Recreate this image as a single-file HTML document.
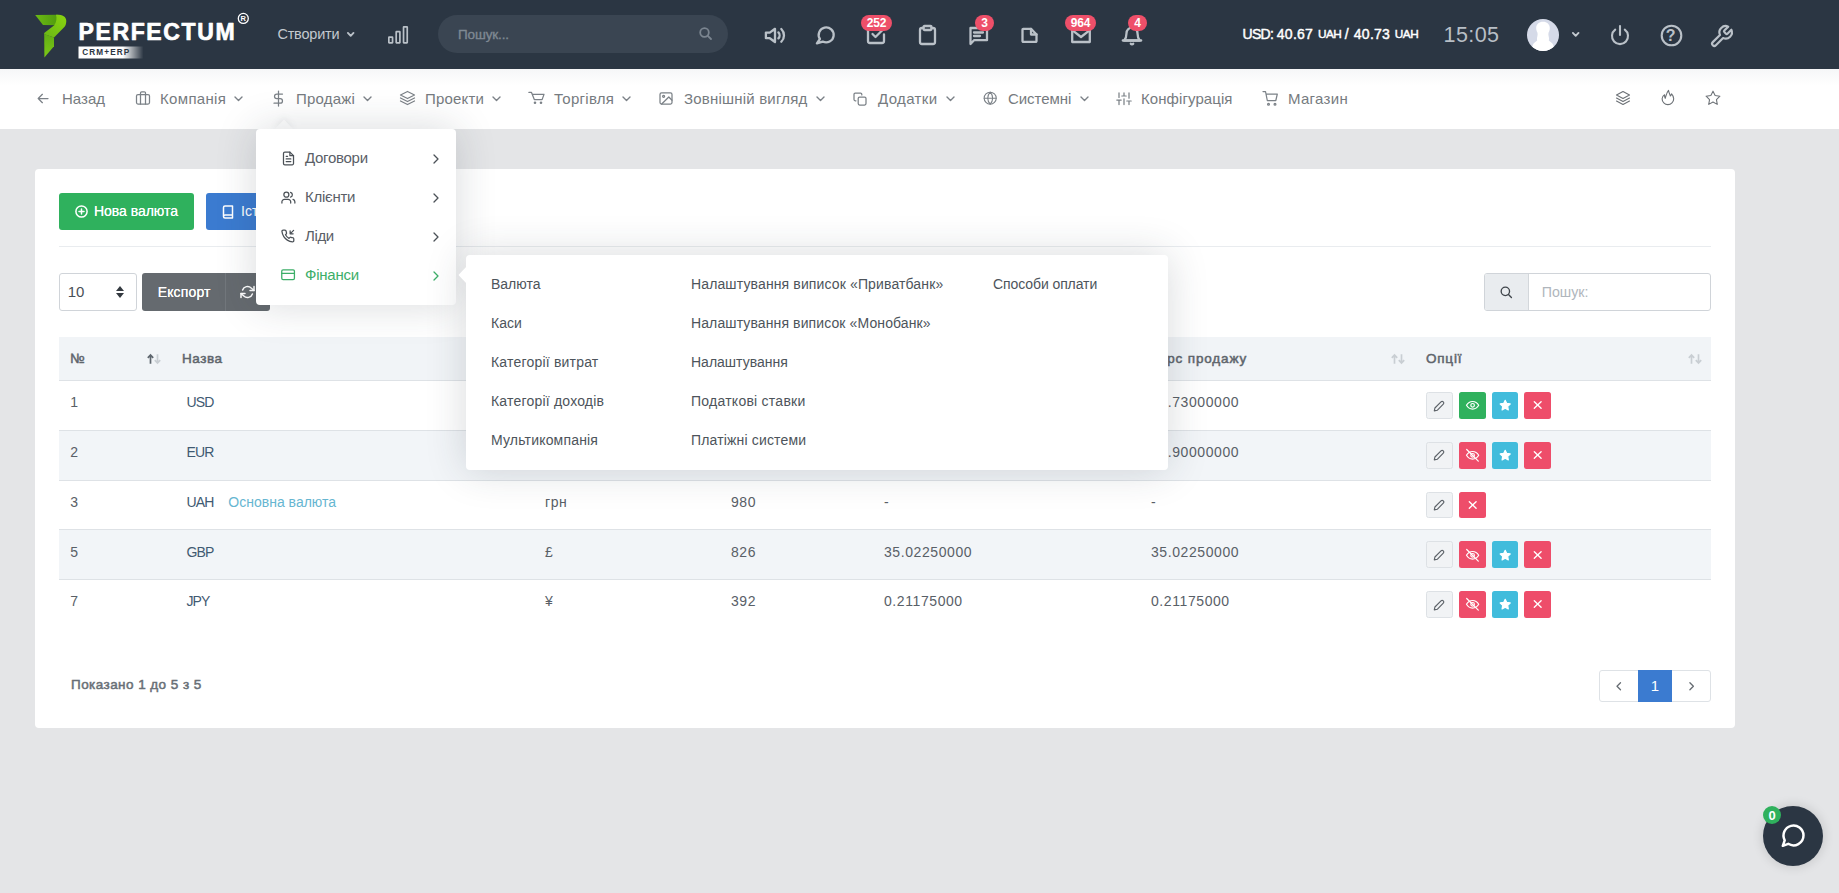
<!DOCTYPE html>
<html lang="uk">
<head>
<meta charset="utf-8">
<title>Валюта</title>
<style>
*{box-sizing:border-box;margin:0;padding:0}
html,body{width:1839px;height:893px;overflow:hidden}
body{font-family:"Liberation Sans",sans-serif;background:#e4e5e7;color:#495057;font-size:14px;position:relative}
.abs{position:absolute}
svg{display:block;overflow:visible}
.ico{fill:none;stroke:currentColor;stroke-width:2;stroke-linecap:round;stroke-linejoin:round}
/* header */
#hdr{position:absolute;left:0;top:0;width:1839px;height:69px;background:#2b3643}
#hdr .t{position:absolute;white-space:nowrap}
.hi{position:absolute;color:#bac1c8}
#hdr .hi.ico{stroke-width:2.300}
.badge{position:absolute;height:15.400px;border-radius:8px;background:#ee4f69;color:#fff;font-weight:700;font-size:12px;line-height:17.400px;text-align:center;letter-spacing:-0.2px;margin-top:.3px;overflow:hidden}
/* nav */
#nav{position:absolute;left:0;top:69px;width:1839px;height:60px;background:linear-gradient(#f6f7f8,#fff 17px)}
.ni{position:absolute;top:0;height:60px;line-height:59px;font-size:15px;color:#767b80;white-space:nowrap}
.nic{position:absolute;color:#7b8187}
.chev{stroke-width:1.400 !important}
/* card */
#card{position:absolute;left:35px;top:169px;width:1700px;height:558.700px;background:#fff;border-radius:4px}
.btn{position:absolute;color:#fff;border-radius:3px;white-space:nowrap;font-size:14px}
table{position:absolute;left:59px;top:337px;width:1652px;border-collapse:collapse;table-layout:fixed;font-size:14px;color:#596067}
th{height:43.5px;background:#f1f4f7;text-align:left;font-weight:400;-webkit-text-stroke:.5px #5e656c;color:#5e656c;padding:0 12px;position:relative;border-bottom:1px solid #dee2e6;font-size:13.5px;letter-spacing:.25px}
td{height:49.75px;padding:0 12px;border-top:1px solid #dee2e6;vertical-align:top;padding-top:13.400px;position:relative}
tr.s td{background:#f2f5f8}
.ob{position:absolute;top:11px;width:26.500px;height:26.800px;border-radius:2.500px;color:#fff}
.ob svg{position:absolute;left:6.300px;top:6.400px}
/* dropdowns */
.dd{position:absolute;background:#fff;border-radius:4px;box-shadow:0 0 40px rgba(40,50,60,.18)}
.di{position:absolute;left:49px;font-size:15px;color:#5a6067;white-space:nowrap;line-height:20px}
.mi{position:absolute;font-size:14px;color:#4d545b;white-space:nowrap;line-height:20px}

.ob{left:12px}
.ob.e{background:#f1f3f5;border:1px solid #dde1e5;color:#5c6268}
.ob.e svg{left:5.300px;top:5.600px}
.ob.g{background:#2fb15d}
.ob.c{background:#41bcdc}
.ob.r{background:#ee4d6a}
.so{position:absolute;right:9.500px;top:17px}
.cn{color:#3f5a72;margin-left:4.500px;letter-spacing:-0.9px}
td.n{letter-spacing:.58px}
td:first-child,th:first-child{padding-left:11.200px}
.mc{color:#66b6d1;margin-left:15px}
.tx{white-space:nowrap}
</style>
</head>
<body>
<div id="hdr">
<!-- logo -->
<svg class="abs" style="left:0;top:0" width="270" height="69" viewBox="0 0 270 69">
<defs>
<linearGradient id="g1" x1="0" y1="0" x2="1" y2="0"><stop offset="0" stop-color="#6cbb14"/><stop offset="1" stop-color="#4f9a0e"/></linearGradient>
<linearGradient id="g2" x1="1" y1="0" x2="0" y2="1"><stop offset="0" stop-color="#8ad40f"/><stop offset="1" stop-color="#6ab716"/></linearGradient>
<linearGradient id="g3" x1="0" y1="0" x2="0" y2="1"><stop offset="0" stop-color="#62ad14"/><stop offset="1" stop-color="#7cc916"/></linearGradient>
<linearGradient id="g4" x1="0" y1="0" x2="1" y2="0"><stop offset="0" stop-color="#fff"/><stop offset=".68" stop-color="#fff"/><stop offset="1" stop-color="#fff" stop-opacity="0"/></linearGradient>
</defs>
<path d="M35.2 15 L58 14.8 L57 25.2 L43 25 Z" fill="url(#g1)"/>
<path d="M56 14.8 C62 14.6 66.4 16.5 66.3 21 C66.2 23.5 65.6 25.6 64.6 26.8 L54 37.6 L44.2 34.2 L44.2 33 L54.3 25.2 C56.5 22 57 18 56 14.8 Z" fill="url(#g2)"/>
<path d="M44.2 34 L54 37.5 L54 46.2 L44.4 57.6 Z" fill="url(#g3)"/>
<rect x="78.5" y="46.5" width="65" height="12" fill="url(#g4)"/>
<text x="78.600" y="40.200" font-family="Liberation Sans, sans-serif" font-weight="700" font-size="23" fill="#fff" stroke="#fff" stroke-width=".700" stroke-linejoin="round" textLength="156" lengthAdjust="spacing">PERFECTUM</text>
<text x="82.300" y="55.200" font-family="Liberation Sans, sans-serif" font-weight="700" font-size="8.2" fill="#2b3643" textLength="47" lengthAdjust="spacing">CRM+ERP</text>
<circle cx="243.3" cy="18.4" r="5" fill="none" stroke="#fff" stroke-width="1.3"/>
<text x="243.3" y="21.2" text-anchor="middle" font-family="Liberation Sans, sans-serif" font-weight="700" font-size="7.5" fill="#fff">R</text>
</svg>
<div class="t" id="crt" style="left:277.400px;top:25px;font-size:14.5px;line-height:18px;color:#c3c9cf;letter-spacing:-0.2px">Створити</div>
<svg class="hi ico" style="left:347.200px;top:31.700px;stroke-width:1.900 !important" width="7.400" height="4.800" viewBox="0 0 7.400 4.800"><path d="M.900 .900l2.800 2.900L6.500 .900"/></svg>
<!-- bars -->
<svg class="hi" style="left:388px;top:26.200px" width="20.200" height="17.700" viewBox="0 0 20.200 17.700" fill="none" stroke="currentColor" stroke-width="1.700"><rect x=".850" y="11.100" width="3.700" height="5.750" rx=".300"/><rect x="8.200" y="5.700" width="3.700" height="11.150" rx=".300"/><rect x="15.550" y=".850" width="3.700" height="16" rx=".300"/></svg>
<!-- search -->
<div class="abs" style="left:438px;top:15px;width:290px;height:38px;border-radius:19px;background:#3a4552"></div>
<div class="t" id="srch" style="left:458px;top:26.800px;font-size:13.500px;line-height:16px;color:#7f8993;-webkit-text-stroke:.35px #7f8993;letter-spacing:-0.12px">Пошук...</div>
<svg class="abs ico" style="left:699px;top:27px;color:#7b8590;stroke-width:1.8" width="13" height="13" viewBox="0 0 13 13"><circle cx="5.5" cy="5.5" r="4.3"/><path d="M8.8 8.8l3.2 3.2"/></svg>
<!-- icons -->
<svg class="hi ico" style="left:764px;top:25px" width="22" height="20" viewBox="0 0 22 20"><path d="M11 3.800L5.800 7.600H1.900v5.600h3.900L11 17z"/><path d="M14.400 7.400a4.400 4.400 0 0 1 0 6"/><path d="M17.300 4a9 9 0 0 1 0 12.800"/></svg>
<svg class="hi ico" style="left:815px;top:25px" width="21" height="21" viewBox="0 0 21 21"><path d="M4.900 14A7.500 7.500 0 1 1 7.700 16.550L1.900 18.400z"/></svg>
<svg class="hi ico" style="left:866px;top:26px" width="20" height="19" viewBox="0 0 20 19"><path d="M18 8.5V15a2 2 0 0 1-2 2H4a2 2 0 0 1-2-2V3.5"/><path d="M6.5 8l3 3 7-7"/></svg>
<div class="badge" style="left:861px;top:15px;width:31px">252</div>
<svg class="hi ico" style="left:918px;top:24px" width="19" height="22" viewBox="0 0 19 22"><path d="M13.5 4H15a2 2 0 0 1 2 2v12a2 2 0 0 1-2 2H4a2 2 0 0 1-2-2V6a2 2 0 0 1 2-2h1.5"/><rect x="5.5" y="2" width="8" height="4" rx="1"/></svg>
<svg class="hi ico" style="left:968px;top:26px" width="21" height="20" viewBox="0 0 21 20"><path d="M19 2H2.5v16l3.5-3.8H19z"/><path d="M6 6.5h9M6 10h6"/></svg>
<div class="badge" style="left:975px;top:15px;width:19px">3</div>
<svg class="hi ico" style="left:1020px;top:27px" width="19" height="17" viewBox="0 0 19 17"><path d="M11 1.800H3.200a.700.700 0 0 0-.700.700v11.600a.700.700 0 0 0 .700.700h12.600a.700.700 0 0 0 .700-.700V7.500z"/><path d="M11 1.800v5.700h5.500"/></svg>
<svg class="hi ico" style="left:1070px;top:27px" width="22" height="18" viewBox="0 0 22 18"><path d="M2.200 2v13h17.600V2"/><path d="M2.200 3.200l8.800 6.800 8.800-6.800"/></svg>
<div class="badge" style="left:1065px;top:15px;width:31px">964</div>
<svg class="hi ico" style="left:1121px;top:25px" width="22" height="21" viewBox="0 0 22 21"><path d="M16.500 8.200a5.500 5.500 0 0 0-11 0c0 3.800-1.200 6-2.300 7.300h15.600c-1.100-1.300-2.300-3.500-2.300-7.300z"/><path d="M1.800 15.500h18.400"/><path d="M12.200 18.700a1.500 1.500 0 0 1-2.400 0"/></svg>
<div class="badge" style="left:1128px;top:15px;width:19px">4</div>
<!-- rate -->
<div class="t" id="r1" style="left:1242.600px;top:25px;font-size:14px;line-height:18px;color:#fff;font-weight:400;-webkit-text-stroke:.45px #fff;letter-spacing:-0.71px">USD:</div><div class="t" id="r2" style="left:1276.800px;top:25px;font-size:14px;line-height:18px;color:#fff;font-weight:400;-webkit-text-stroke:.45px #fff;letter-spacing:0.27px">40.67</div><div class="t" id="r3" style="left:1318px;top:26px;font-size:11.800px;line-height:16px;color:#fff;font-weight:400;-webkit-text-stroke:.45px #fff;letter-spacing:-0.57px">UAH</div><div class="t" id="r4" style="left:1344.800px;top:25px;font-size:14px;line-height:18px;color:#fff;font-weight:400;-webkit-text-stroke:.45px #fff">/</div><div class="t" id="r5" style="left:1353.800px;top:25px;font-size:14px;line-height:18px;color:#fff;font-weight:400;-webkit-text-stroke:.45px #fff;letter-spacing:0.27px">40.73</div><div class="t" id="r6" style="left:1394.800px;top:26px;font-size:11.800px;line-height:16px;color:#fff;font-weight:400;-webkit-text-stroke:.45px #fff;letter-spacing:-0.47px">UAH</div>
<div class="t" id="clk" style="left:1443.500px;top:20.700px;font-size:21.500px;line-height:28px;color:#b8bfc6;letter-spacing:0.42px">15:05</div>
<!-- avatar -->
<svg class="abs" style="left:1527px;top:19px" width="32" height="32" viewBox="0 0 32 32"><defs><clipPath id="av"><circle cx="16" cy="16" r="16"/></clipPath></defs><g clip-path="url(#av)"><rect width="32" height="32" fill="#d5dae8"/><path d="M16 2.800c-4 0-6.800 2.600-6.800 6.200 0 2 .600 3.400 1.200 4.600.300 1 .300 2.200 0 3.400-.400 1.600-.600 3-.200 4.600-1.500 1.200-3.600 2.400-4.400 4.400-.700 1.800-.800 4-.800 6h22c0-2-.100-4.200-.800-6-.800-2-2.900-3.200-4.400-4.400.400-1.600.200-3-.200-4.600-.300-1.200-.300-2.400 0-3.400.600-1.200 1.200-2.600 1.200-4.600 0-3.600-2.800-6.200-6.800-6.200z" fill="#fff"/></g></svg>
<svg class="hi ico" style="left:1572.100px;top:31.600px;stroke-width:1.900 !important;color:#c3c9cf" width="7.400" height="4.800" viewBox="0 0 7.400 4.800"><path d="M.900 .900l2.800 2.900L6.500 .900"/></svg>
<svg class="hi ico" style="left:1609px;top:24px;stroke-width:2.100 !important" width="22" height="22" viewBox="0 0 22 22"><path d="M15.800 5.700a8 8 0 1 1-9.600 0"/><path d="M11 2v9"/></svg>
<svg class="hi ico" style="left:1659.800px;top:24.200px;stroke-width:2.100 !important" width="23" height="23" viewBox="0 0 23 23"><circle cx="11.500" cy="11.500" r="9.800"/></svg>
<div class="t" style="left:1665.700px;top:26.400px;font-size:16px;line-height:19px;font-weight:700;color:#bac1c8">?</div>
<svg class="hi ico" style="left:1709.400px;top:24.300px;stroke-width:2.100 !important" width="25" height="25" viewBox="0 0 24 24"><path d="M14.700 6.300a1 1 0 0 0 0 1.400l1.600 1.600a1 1 0 0 0 1.400 0l3.770-3.770a6 6 0 0 1-7.940 7.940l-6.910 6.910a2.120 2.120 0 0 1-3-3l6.910-6.910a6 6 0 0 1 7.940-7.940l-3.760 3.760z"/></svg>
</div>
<div id="nav">
<svg class="nic ico" style="left:36.500px;top:23.500px;stroke-width:1.250" width="12" height="11" viewBox="0 0 12 11"><path d="M11 5.500H1.200M5.400 1.300L1.200 5.500l4.200 4.200"/></svg>
<div class="ni" id="n0" style="left:62px">Назад</div>
<svg class="nic ico" style="left:135px;top:21px;stroke-width:1.250" width="16" height="16" viewBox="0 0 16 16"><rect x="1.500" y="4.500" width="13" height="9.500" rx="1.500"/><path d="M5.500 14V3a1.200 1.200 0 0 1 1.200-1.200h2.600A1.200 1.200 0 0 1 10.500 3v11"/></svg>
<div class="ni" id="n1" style="left:160px;letter-spacing:0.33px">Компанія</div>
<svg class="nic ico chev" style="left:234px;top:27px" width="9" height="6" viewBox="0 0 9 6"><path d="M1 1l3.500 3.500L8 1"/></svg>
<svg class="nic ico" style="left:272px;top:21px;stroke-width:1.250" width="13" height="17" viewBox="0 0 13 17"><path d="M6.500 1v15"/><path d="M10.500 4H4.800a2.300 2.300 0 0 0 0 4.600h3.400a2.300 2.300 0 0 1 0 4.600H2"/></svg>
<div class="ni" id="n2" style="left:296px;letter-spacing:0.2px">Продажі</div>
<svg class="nic ico chev" style="left:363px;top:27px" width="9" height="6" viewBox="0 0 9 6"><path d="M1 1l3.500 3.500L8 1"/></svg>
<svg class="nic ico" style="left:399px;top:21px;stroke-width:1.250" width="17" height="16" viewBox="0 0 17 16"><path d="M8.500 1.500L1.500 5l7 3.500 7-3.500z"/><path d="M1.500 8l7 3.500 7-3.500"/><path d="M1.500 11l7 3.500 7-3.500"/></svg>
<div class="ni" id="n3" style="left:425px;letter-spacing:0.17px">Проекти</div>
<svg class="nic ico chev" style="left:492px;top:27px" width="9" height="6" viewBox="0 0 9 6"><path d="M1 1l3.500 3.500L8 1"/></svg>
<svg class="nic ico" style="left:528px;top:20.600px;stroke-width:1.250" width="17" height="15" viewBox="0 0 17 15"><circle cx="7" cy="12.700" r=".700"/><circle cx="13" cy="12.700" r=".700"/><path d="M.900 2.400h2.600l2.800 7.200h7.800L16 4.400H4.800"/></svg>
<div class="ni" id="n4" style="left:554px;letter-spacing:0.28px">Торгівля</div>
<svg class="nic ico chev" style="left:622px;top:27px" width="9" height="6" viewBox="0 0 9 6"><path d="M1 1l3.500 3.500L8 1"/></svg>
<svg class="nic ico" style="left:659.300px;top:23px;stroke-width:1.250" width="14" height="13" viewBox="0 0 14 13"><rect x="1" y=".900" width="12" height="11.200" rx="1.500"/><circle cx="4.600" cy="4.300" r="1"/><path d="M13 8.200L9.800 5 2.700 12"/></svg>
<div class="ni" id="n5" style="left:684px;letter-spacing:0.2px">Зовнішній вигляд</div>
<svg class="nic ico chev" style="left:816px;top:27px" width="9" height="6" viewBox="0 0 9 6"><path d="M1 1l3.500 3.500L8 1"/></svg>
<svg class="nic ico" style="left:853px;top:22.500px;stroke-width:1.250" width="14" height="14" viewBox="0 0 14 14"><rect x="5.200" y="5.200" width="7.800" height="7.800" rx="1.400"/><path d="M2.900 8.800H2.200A1.200 1.200 0 0 1 1 7.600V2.200A1.200 1.200 0 0 1 2.200 1h5.400a1.200 1.200 0 0 1 1.200 1.200v.700"/></svg>
<div class="ni" id="n6" style="left:878px;letter-spacing:0.37px">Додатки</div>
<svg class="nic ico chev" style="left:946px;top:27px" width="9" height="6" viewBox="0 0 9 6"><path d="M1 1l3.500 3.500L8 1"/></svg>
<svg class="nic ico" style="left:983px;top:22.200px;stroke-width:1.200" width="14.400" height="14.400" viewBox="0 0 16 16"><circle cx="8" cy="8" r="6.700"/><path d="M1.300 8h13.400"/><path d="M8 1.300a10 10 0 0 1 2.700 6.700A10 10 0 0 1 8 14.700 10 10 0 0 1 5.300 8 10 10 0 0 1 8 1.300z"/></svg>
<div class="ni" id="n7" style="left:1008px;letter-spacing:-0.06px">Системні</div>
<svg class="nic ico chev" style="left:1080px;top:27px" width="9" height="6" viewBox="0 0 9 6"><path d="M1 1l3.500 3.500L8 1"/></svg>
<svg class="nic ico" style="left:1116px;top:23px;stroke-width:1.250" width="16" height="13.500" viewBox="0 0 16 15" preserveAspectRatio="none"><path d="M3 14V9M3 6V1M8 14V7.500M8 4.500V1M13 14v-4M13 7V1M.800 9h4.400M5.800 4.500h4.400M10.800 10h4.400"/></svg>
<div class="ni" id="n8" style="left:1141px;letter-spacing:0.08px">Конфігурація</div>
<svg class="nic ico" style="left:1262px;top:21px;stroke-width:1.250" width="17" height="17" viewBox="0 0 17 17"><circle cx="6.500" cy="14.300" r=".900"/><circle cx="13" cy="14.300" r=".900"/><path d="M1 1.500h2.500l1.800 9h8.500l1.500-6.300H4.200"/></svg>
<div class="ni" id="n9" style="left:1288px;letter-spacing:0.3px">Магазин</div>
<svg class="nic ico" style="left:1615px;top:21.300px;stroke-width:1.100;color:#6c7176" width="16" height="16" viewBox="0 0 16 16"><path d="M8 1.500L1.500 5 8 8.500 14.500 5z"/><path d="M1.500 8L8 11.500 14.500 8"/><path d="M1.500 11L8 14.500 14.500 11"/></svg>
<svg class="nic ico" style="left:1662px;top:21.300px;stroke-width:1.100;color:#6c7176" width="12" height="15" viewBox="0 0 12 15"><path d="M6.500 .300C6.800 3 8 4.500 8.400 6 9 5.300 9.400 4.600 9.600 3.800 11 5.300 11.700 7 11.700 8.800A5.800 5.800 0 0 1 .100 8.800C.100 7.300 .900 5.900 2.600 4.800 2.500 6.200 2.700 7.400 3.200 8.300 4 6 4.500 2.500 6.500 .300z"/></svg>
<svg class="nic ico" style="left:1704.900px;top:21px;stroke-width:1.200;color:#6c7176" width="16" height="15.100" viewBox="0 0 18 17"><path d="M9 1.300l2.400 4.900 5.400.800-3.900 3.800.900 5.400L9 13.600l-4.800 2.600.900-5.400L1.200 7l5.400-.800z"/></svg>
</div>
<div id="card"></div>
<!-- buttons -->
<div class="btn" style="left:59px;top:193px;width:135px;height:37px;background:#2fb15d"></div>
<svg class="abs ico" style="left:75px;top:205px;color:#fff;stroke-width:1.500" width="13" height="13" viewBox="0 0 13 13"><circle cx="6.500" cy="6.500" r="5.600"/><path d="M6.500 4v5M4 6.500h5"/></svg>
<div class="abs tx" id="b1" style="left:94px;top:202px;color:#fff;font-size:14px;line-height:18px;white-space:nowrap;text-shadow:0 0 .4px #fff;letter-spacing:-0.04px">Нова валюта</div>
<div class="btn" style="left:206px;top:193px;width:120px;height:37px;background:#3b7bd0"></div>
<svg class="abs ico" style="left:222px;top:204.500px;color:#fff;stroke-width:1.500" width="12" height="14" viewBox="0 0 12 14"><path d="M1.500 11.500V2.500A1.500 1.500 0 0 1 3 1h7.500v12H3a1.500 1.500 0 0 1 0-3h7.500"/></svg>
<div class="abs tx" style="left:241px;top:202px;color:#fff;font-size:14px;line-height:18px;white-space:nowrap">Історія</div>
<div class="abs" style="left:59px;top:245.500px;width:1652px;height:1px;background:#e9ecef"></div>
<!-- length select -->
<div class="abs" style="left:59px;top:273px;width:78px;height:38px;border:1px solid #d0d4d9;border-radius:3px;background:#fff"></div>
<div class="abs tx" style="left:67.700px;top:283px;font-size:15px;line-height:18px;color:#495057">10</div>
<svg class="abs" style="left:116px;top:286px" width="8" height="12" viewBox="0 0 8 12"><path d="M4 0L8 5H0zM4 12L0 7h8z" fill="#343a40"/></svg>
<!-- export group -->
<div class="abs" style="left:142px;top:273px;width:128px;height:38px;border-radius:3px;background:#656a6f"></div>
<div class="abs" style="left:225px;top:273px;width:1px;height:38px;background:#72777c"></div>
<div class="abs tx" id="b2" style="left:157.700px;top:283px;color:#fff;font-size:14px;line-height:18px;white-space:nowrap;text-shadow:0 0 .4px #fff;letter-spacing:0.15px">Експорт</div>
<svg class="abs ico" style="left:240px;top:285px;color:#fff;stroke-width:1.500" width="15" height="14" viewBox="0 0 15 14"><path d="M14 1.500v4h-4"/><path d="M1 12.500v-4h4"/><path d="M2.600 5a5.200 5.200 0 0 1 8.600-2L14 5.500M1 8.500l2.800 2.500a5.200 5.200 0 0 0 8.600-2"/></svg>
<!-- search -->
<div class="abs" style="left:1484px;top:273px;width:227px;height:38px;border:1px solid #d0d4d9;border-radius:3px;background:#fff"></div>
<div class="abs" style="left:1485px;top:274px;width:44px;height:36px;border-right:1px solid #d3d7db;border-radius:2px 0 0 2px;background:#e9ecef"></div>
<svg class="abs ico" style="left:1500.200px;top:285.600px;color:#3f454b;stroke-width:1.500" width="12.500" height="12.500" viewBox="0 0 14 14"><circle cx="6" cy="6" r="4.700"/><path d="M9.500 9.500l3.300 3.300"/></svg>
<div class="abs tx" style="left:1541.700px;top:283.300px;font-size:14.200px;line-height:18px;color:#b0b6bc">Пошук:</div>
<!-- table -->
<table>
<colgroup><col style="width:111px"><col style="width:363px"><col style="width:186px"><col style="width:153px"><col style="width:267px"><col style="width:275px"><col style="width:297px"></colgroup>
<thead><tr><th><span id="h0" style="letter-spacing:0">№</span><svg class="so" width="14" height="10" viewBox="0 0 14 10" fill="none" stroke-width="1.700"><path d="M3.500 9.800V1.200M.800 3.800L3.500 1l2.700 2.800" stroke="#5e666e"/><path d="M10.500 .200v8.600M7.800 6.200L10.500 9l2.700-2.800" stroke="#c9ced3"/></svg></th><th><span id="h1" style="letter-spacing:.55px">Назва</span><svg class="so" width="14" height="10" viewBox="0 0 14 10" fill="none" stroke-width="1.700"><path d="M3.500 9.800V1.200M.800 3.800L3.500 1l2.700 2.800" stroke="#c9ced3"/><path d="M10.500 .200v8.600M7.800 6.200L10.500 9l2.700-2.800" stroke="#c9ced3"/></svg></th><th><span id="h2" style="letter-spacing:.7px">Символ</span><svg class="so" width="14" height="10" viewBox="0 0 14 10" fill="none" stroke-width="1.700"><path d="M3.500 9.800V1.200M.800 3.800L3.500 1l2.700 2.800" stroke="#c9ced3"/><path d="M10.500 .200v8.600M7.800 6.200L10.500 9l2.700-2.800" stroke="#c9ced3"/></svg></th><th><span id="h3" style="letter-spacing:.7px">ISO код</span><svg class="so" width="14" height="10" viewBox="0 0 14 10" fill="none" stroke-width="1.700"><path d="M3.500 9.800V1.200M.800 3.800L3.500 1l2.700 2.800" stroke="#c9ced3"/><path d="M10.500 .200v8.600M7.800 6.200L10.500 9l2.700-2.800" stroke="#c9ced3"/></svg></th><th><span id="h4" style="letter-spacing:.8px">Курс купівлі</span><svg class="so" width="14" height="10" viewBox="0 0 14 10" fill="none" stroke-width="1.700"><path d="M3.500 9.800V1.200M.800 3.800L3.500 1l2.700 2.800" stroke="#c9ced3"/><path d="M10.500 .200v8.600M7.800 6.200L10.500 9l2.700-2.800" stroke="#c9ced3"/></svg></th><th><span id="h5" style="letter-spacing:.85px">Курс продажу</span><svg class="so" width="14" height="10" viewBox="0 0 14 10" fill="none" stroke-width="1.700"><path d="M3.500 9.800V1.200M.800 3.800L3.500 1l2.700 2.800" stroke="#c9ced3"/><path d="M10.500 .200v8.600M7.800 6.200L10.500 9l2.700-2.800" stroke="#c9ced3"/></svg></th><th><span id="h6" style="letter-spacing:.78px">Опції</span><svg class="so" width="14" height="10" viewBox="0 0 14 10" fill="none" stroke-width="1.700"><path d="M3.500 9.800V1.200M.800 3.800L3.500 1l2.700 2.800" stroke="#c9ced3"/><path d="M10.500 .200v8.600M7.800 6.200L10.500 9l2.700-2.800" stroke="#c9ced3"/></svg></th></tr></thead>
<tbody>
<tr><td class="n">1</td><td><span class="cn">USD</span></td><td>$</td><td class="n">840</td><td class="n">40.67000000</td><td class="n">40.73000000</td><td><b class="ob e"><svg class="ico" width="14" height="14" viewBox="0 0 14 14" style="stroke-width:1.150"><path d="M2.300 11.900l.600-2.900 6.100-6.100a1.650 1.650 0 0 1 2.300 0 1.650 1.650 0 0 1 0 2.300l-6.100 6.100z"/></svg></b><b class="ob g" style="left:45px;width:27px"><svg class="ico" width="14" height="14" viewBox="0 0 14 14" style="stroke-width:1.200"><path d="M1.500 7.300S3.700 3.500 7.600 3.500s6.100 3.800 6.100 3.800-2.200 3.800-6.100 3.800S1.500 7.300 1.500 7.300z"/><circle cx="7.600" cy="7.300" r="1.800"/></svg></b><b class="ob c" style="left:78.200px;width:25.800px"><svg width="14" height="14" viewBox="0 0 14 14"><path d="M7.200 2.300l1.550 3.150 3.450.500-2.500 2.450.600 3.450L7.200 10.200l-3.100 1.650.600-3.450-2.500-2.450 3.450-.500z" fill="#fff" stroke="#fff" stroke-width="1.200" stroke-linejoin="round"/></svg></b><b class="ob r" style="left:110.200px;width:26.800px"><svg class="ico" width="14" height="14" viewBox="0 0 14 14" style="stroke-width:1.400"><path d="M4.300 3.800l6.800 6.400M11.100 3.800l-6.800 6.400"/></svg></b></td></tr>
<tr class="s"><td class="n">2</td><td><span class="cn">EUR</span></td><td>€</td><td class="n">978</td><td class="n">43.60000000</td><td class="n">43.90000000</td><td><b class="ob e"><svg class="ico" width="14" height="14" viewBox="0 0 14 14" style="stroke-width:1.150"><path d="M2.300 11.900l.600-2.900 6.100-6.100a1.650 1.650 0 0 1 2.300 0 1.650 1.650 0 0 1 0 2.300l-6.100 6.100z"/></svg></b><b class="ob r h" style="left:45px;width:27px"><svg class="ico" width="14" height="14" viewBox="0 0 14 14" style="stroke-width:1.200"><path d="M1.500 7.300S3.700 3.500 7.600 3.500s6.100 3.800 6.100 3.800-2.200 3.800-6.100 3.800S1.500 7.300 1.500 7.300z"/><circle cx="7.600" cy="7.300" r="1.800"/><path d="M1.700 1.500l11.600 11.600"/></svg></b><b class="ob c" style="left:78.200px;width:25.800px"><svg width="14" height="14" viewBox="0 0 14 14"><path d="M7.200 2.300l1.550 3.150 3.450.500-2.500 2.450.600 3.450L7.200 10.200l-3.100 1.650.600-3.450-2.500-2.450 3.450-.500z" fill="#fff" stroke="#fff" stroke-width="1.200" stroke-linejoin="round"/></svg></b><b class="ob r" style="left:110.200px;width:26.800px"><svg class="ico" width="14" height="14" viewBox="0 0 14 14" style="stroke-width:1.400"><path d="M4.300 3.800l6.800 6.400M11.100 3.800l-6.800 6.400"/></svg></b></td></tr>
<tr><td class="n">3</td><td><span class="cn">UAH</span><span class="mc">Основна валюта</span></td><td style="letter-spacing:.6px">грн</td><td class="n">980</td><td>-</td><td>-</td><td><b class="ob e"><svg class="ico" width="14" height="14" viewBox="0 0 14 14" style="stroke-width:1.150"><path d="M2.300 11.900l.600-2.900 6.100-6.100a1.650 1.650 0 0 1 2.300 0 1.650 1.650 0 0 1 0 2.300l-6.100 6.100z"/></svg></b><b class="ob r" style="left:45px;width:27px"><svg class="ico" width="14" height="14" viewBox="0 0 14 14" style="stroke-width:1.400"><path d="M4.300 3.800l6.800 6.400M11.100 3.800l-6.800 6.400"/></svg></b></td></tr>
<tr class="s"><td class="n">5</td><td><span class="cn">GBP</span></td><td>£</td><td class="n">826</td><td class="n">35.02250000</td><td class="n">35.02250000</td><td><b class="ob e"><svg class="ico" width="14" height="14" viewBox="0 0 14 14" style="stroke-width:1.150"><path d="M2.300 11.900l.600-2.900 6.100-6.100a1.650 1.650 0 0 1 2.300 0 1.650 1.650 0 0 1 0 2.300l-6.100 6.100z"/></svg></b><b class="ob r h" style="left:45px;width:27px"><svg class="ico" width="14" height="14" viewBox="0 0 14 14" style="stroke-width:1.200"><path d="M1.500 7.300S3.700 3.500 7.600 3.500s6.100 3.800 6.100 3.800-2.200 3.800-6.100 3.800S1.500 7.300 1.500 7.300z"/><circle cx="7.600" cy="7.300" r="1.800"/><path d="M1.700 1.500l11.600 11.600"/></svg></b><b class="ob c" style="left:78.200px;width:25.800px"><svg width="14" height="14" viewBox="0 0 14 14"><path d="M7.200 2.300l1.550 3.150 3.450.500-2.500 2.450.600 3.450L7.200 10.200l-3.100 1.650.600-3.450-2.500-2.450 3.450-.500z" fill="#fff" stroke="#fff" stroke-width="1.200" stroke-linejoin="round"/></svg></b><b class="ob r" style="left:110.200px;width:26.800px"><svg class="ico" width="14" height="14" viewBox="0 0 14 14" style="stroke-width:1.400"><path d="M4.300 3.800l6.800 6.400M11.100 3.800l-6.800 6.400"/></svg></b></td></tr>
<tr><td class="n">7</td><td><span class="cn">JPY</span></td><td>¥</td><td class="n">392</td><td class="n">0.21175000</td><td class="n">0.21175000</td><td><b class="ob e"><svg class="ico" width="14" height="14" viewBox="0 0 14 14" style="stroke-width:1.150"><path d="M2.300 11.900l.600-2.900 6.100-6.100a1.650 1.650 0 0 1 2.300 0 1.650 1.650 0 0 1 0 2.300l-6.100 6.100z"/></svg></b><b class="ob r h" style="left:45px;width:27px"><svg class="ico" width="14" height="14" viewBox="0 0 14 14" style="stroke-width:1.200"><path d="M1.500 7.300S3.700 3.500 7.600 3.500s6.100 3.800 6.100 3.800-2.200 3.800-6.100 3.800S1.500 7.300 1.500 7.300z"/><circle cx="7.600" cy="7.300" r="1.800"/><path d="M1.700 1.500l11.600 11.600"/></svg></b><b class="ob c" style="left:78.200px;width:25.800px"><svg width="14" height="14" viewBox="0 0 14 14"><path d="M7.200 2.300l1.550 3.150 3.450.500-2.500 2.450.600 3.450L7.200 10.200l-3.100 1.650.600-3.450-2.500-2.450 3.450-.500z" fill="#fff" stroke="#fff" stroke-width="1.200" stroke-linejoin="round"/></svg></b><b class="ob r" style="left:110.200px;width:26.800px"><svg class="ico" width="14" height="14" viewBox="0 0 14 14" style="stroke-width:1.400"><path d="M4.300 3.800l6.800 6.400M11.100 3.800l-6.800 6.400"/></svg></b></td></tr>
</tbody>
</table>
<div class="abs tx" id="info" style="left:71px;top:676px;font-size:13.500px;line-height:18px;font-weight:400;-webkit-text-stroke:.5px #686f76;color:#686f76;white-space:nowrap;letter-spacing:0.44px">Показано 1 до 5 з 5</div>
<!-- pagination -->
<div class="abs" style="left:1599px;top:670px;width:112px;height:32px;border:1px solid #dee2e6;border-radius:3px;background:#fff"></div>
<div class="abs" style="left:1638px;top:670px;width:34px;height:32px;background:#3b7bd0;color:#fff;font-size:15px;line-height:32px;text-align:center">1</div>
<svg class="abs ico" style="left:1616.300px;top:681.800px;color:#666c72;stroke-width:1.300" width="5.400" height="8.600" viewBox="0 0 5.400 8.600"><path d="M4.500 .800L1 4.300l3.500 3.500"/></svg>
<svg class="abs ico" style="left:1688.700px;top:681.800px;color:#666c72;stroke-width:1.300" width="5.400" height="8.600" viewBox="0 0 5.400 8.600"><path d="M.900 .800l3.500 3.500-3.500 3.500"/></svg>

<!-- dropdown level 1 -->
<svg class="abs" style="left:270px;top:118px;filter:drop-shadow(0 -2px 3px rgba(40,50,60,.08))" width="28" height="12" viewBox="0 0 28 12"><path d="M4 12L14 1.500 24 12z" fill="#fff"/></svg>
<div class="dd" style="left:256px;top:129px;width:200px;height:176px">
<svg class="abs ico" style="left:25.700px;top:21.500px;color:#4b5157;stroke-width:1.350" width="13" height="14.900" viewBox="0 0 14 16"><path d="M8.500 1.200H3A1.400 1.400 0 0 0 1.600 2.600v10.800A1.400 1.400 0 0 0 3 14.800h8a1.400 1.400 0 0 0 1.400-1.400V5z"/><path d="M8.500 1.200V5h3.900M4.500 8.500h5M4.500 11.300h5M4.500 5.700h1.500"/></svg>
<div class="di" id="d0" style="top:19px;letter-spacing:-0.28px">Договори</div>
<svg class="abs ico" style="left:24.700px;top:61.600px;color:#4b5157;stroke-width:1.350" width="14.800" height="13" viewBox="0 0 16 14"><path d="M10.500 13v-1.300A2.700 2.700 0 0 0 7.800 9H3.700A2.700 2.700 0 0 0 1 11.700V13"/><circle cx="5.800" cy="4" r="2.700"/><path d="M15 13v-1.300a2.700 2.700 0 0 0-2-2.600M10.300 1.400a2.700 2.700 0 0 1 0 5.200"/></svg>
<div class="di" id="d1" style="top:58px;letter-spacing:-0.26px">Клієнти</div>
<svg class="abs ico" style="left:25.300px;top:99.600px;color:#4b5157;stroke-width:1.350" width="14" height="14" viewBox="0 0 15 15"><path d="M13.500 1.500L9.800 5.200M9.800 2v3.200H13"/><path d="M13.700 10.700v1.900a1.300 1.300 0 0 1-1.400 1.300 12.600 12.600 0 0 1-5.500-2 12.400 12.400 0 0 1-3.800-3.800 12.600 12.600 0 0 1-2-5.500A1.300 1.300 0 0 1 2.300 1.200h1.900a1.300 1.300 0 0 1 1.300 1.100 8 8 0 0 0 .4 1.800 1.300 1.300 0 0 1-.3 1.300l-.8.800a10.200 10.200 0 0 0 3.800 3.800l.8-.8a1.300 1.300 0 0 1 1.300-.300 8 8 0 0 0 1.800.400 1.300 1.300 0 0 1 1.200 1.400z"/></svg>
<div class="di" id="d2" style="top:97px;letter-spacing:-0.38px">Ліди</div>
<svg class="abs ico" style="left:25px;top:140.300px;color:#3cae68;stroke-width:1.350" width="14.200" height="11.400" viewBox="0 0 15 12"><rect x=".800" y=".800" width="13.400" height="10.400" rx="1.400"/><path d="M.800 4.500h13.400"/></svg>
<div class="di" id="d3" style="top:136px;color:#3cae68;letter-spacing:-0.23px">Фінанси</div>
<svg class="abs ico" style="left:177px;top:25px;color:#4b5157;stroke-width:1.300" width="6" height="10" viewBox="0 0 6 10"><path d="M1 1l4 4-4 4"/></svg>
<svg class="abs ico" style="left:177px;top:64px;color:#4b5157;stroke-width:1.300" width="6" height="10" viewBox="0 0 6 10"><path d="M1 1l4 4-4 4"/></svg>
<svg class="abs ico" style="left:177px;top:103px;color:#4b5157;stroke-width:1.300" width="6" height="10" viewBox="0 0 6 10"><path d="M1 1l4 4-4 4"/></svg>
<svg class="abs ico" style="left:177px;top:142px;color:#3cae68;stroke-width:1.300" width="6" height="10" viewBox="0 0 6 10"><path d="M1 1l4 4-4 4"/></svg>
</div>
<!-- mega -->
<div class="dd" style="left:466px;top:255px;width:702px;height:215px">
<svg class="abs" style="left:-8px;top:11px" width="9" height="18" viewBox="0 0 9 18"><path d="M9 0L.500 9 9 18z" fill="#fff"/></svg>
<div class="mi" id="m0" style="left:25px;top:19px">Валюта</div>
<div class="mi" id="m1" style="left:25px;top:58px">Каси</div>
<div class="mi" id="m2" style="left:25px;top:97px;letter-spacing:0.2px">Категорії витрат</div>
<div class="mi" id="m3" style="left:25px;top:136px;letter-spacing:0.2px">Категорії доходів</div>
<div class="mi" id="m4" style="left:25px;top:175px;letter-spacing:0.18px">Мультикомпанія</div>
<div class="mi" id="m5" style="left:225px;top:19px;letter-spacing:0.13px">Налаштування виписок «Приватбанк»</div>
<div class="mi" id="m6" style="left:225px;top:58px;letter-spacing:0.11px">Налаштування виписок «Монобанк»</div>
<div class="mi" id="m7" style="left:225px;top:97px">Налаштування</div>
<div class="mi" id="m8" style="left:225px;top:136px;letter-spacing:0.25px">Податкові ставки</div>
<div class="mi" id="m9" style="left:225px;top:175px;letter-spacing:0.16px">Платіжні системи</div>
<div class="mi" id="m10" style="left:527px;top:19px;letter-spacing:-0.09px">Способи оплати</div>
</div>
<!-- chat float -->
<div class="abs" style="left:1763px;top:806px;width:60px;height:60px;border-radius:30px;background:#2b3643;box-shadow:0 0 12px rgba(0,0,0,.16)"></div>
<svg class="abs ico" style="left:1780px;top:823px;color:#fff;stroke-width:2.500" width="26" height="26" viewBox="0 0 26 26"><path d="M23.500 12.300a10 10 0 0 1-15.300 8.500L2.800 22.800l1.900-5.500A10 10 0 1 1 23.500 12.300z"/></svg>
<div class="abs" style="left:1763px;top:806px;width:18px;height:18px;border-radius:9px;background:#2fb15d;color:#fff;font-weight:700;font-size:13px;line-height:19px;text-align:center">0</div>
</body>
</html>
